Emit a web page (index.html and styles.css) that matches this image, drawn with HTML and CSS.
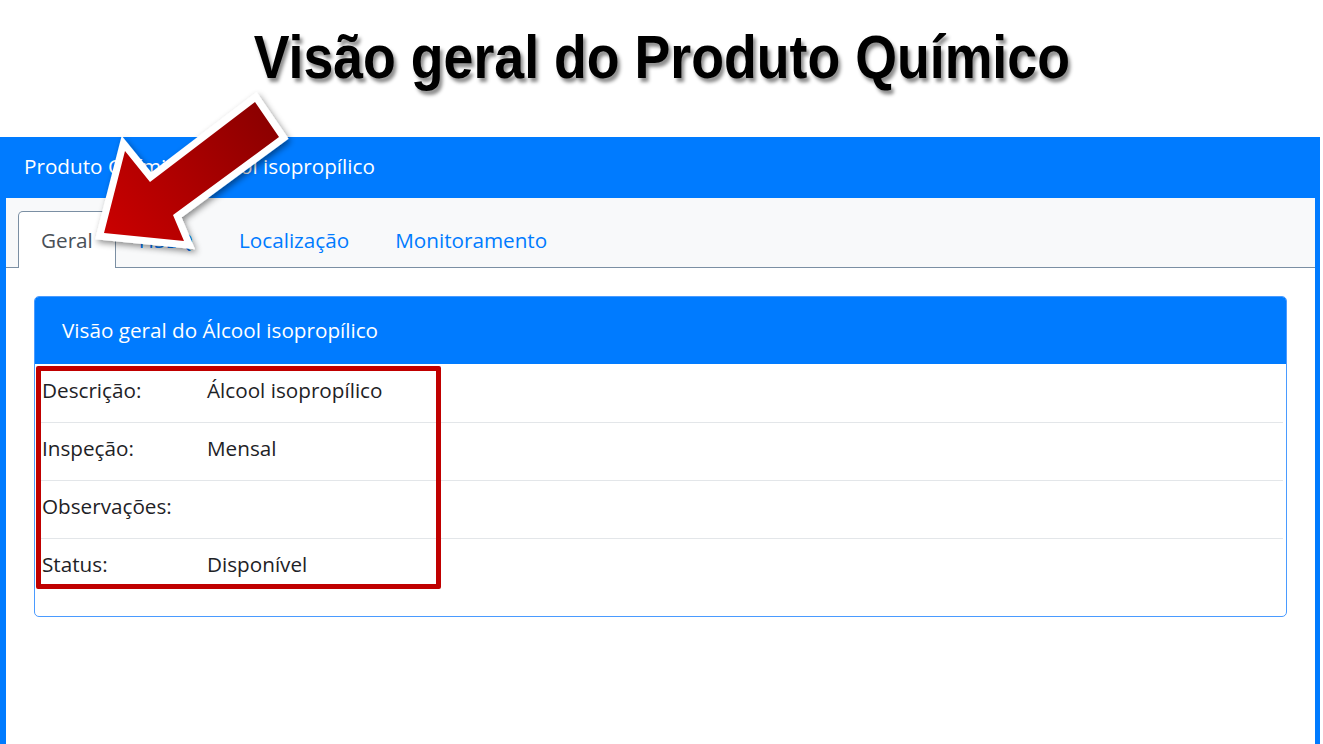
FILE: index.html
```html
<!DOCTYPE html>
<html lang="pt">
<head>
<meta charset="utf-8">
<title>Visão geral do Produto Químico</title>
<link rel="stylesheet" href="styles.css">
</head>
<body>
<div class="slide">
  <header class="slide-title"><h1><span>Visão geral do Produto Químico</span></h1></header>
  <section class="panel">
    <div class="panel-header">Produto Químico: Álcool isopropílico</div>
    <nav class="tabs">
      <a class="tab active">Geral</a>
      <a class="tab">HSEQ</a>
      <a class="tab">Localização</a>
      <a class="tab">Monitoramento</a>
    </nav>
    <div class="panel-body">
      <div class="card">
        <div class="card-header">Visão geral do Álcool isopropílico</div>
        <div class="card-body">
          <table class="info">
            <tr><th>Descrição:</th><td>Álcool isopropílico</td></tr>
            <tr><th>Inspeção:</th><td>Mensal</td></tr>
            <tr><th>Observações:</th><td></td></tr>
            <tr><th>Status:</th><td>Disponível</td></tr>
          </table>
          <div class="highlight"></div>
        </div>
      </div>
    </div>
  </section>
  <svg class="arrow" width="220" height="190" viewBox="80 85 220 190" xmlns="http://www.w3.org/2000/svg">
    <defs>
      <linearGradient id="rg" x1="270" y1="110" x2="110" y2="230" gradientUnits="userSpaceOnUse">
        <stop offset="0" stop-color="#8a0000"/>
        <stop offset="0.6" stop-color="#b00000"/>
        <stop offset="1" stop-color="#c80000"/>
      </linearGradient>
      <filter id="sh" x="-20%" y="-20%" width="140%" height="140%">
        <feDropShadow dx="2" dy="3" stdDeviation="3" flood-color="#000" flood-opacity="0.45"/>
      </filter>
    </defs>
    <polygon points="104,233 125,151 150,182 255,102 279,137 173,215 184,241" fill="#fff" stroke="#fff" stroke-width="14" stroke-linejoin="miter" stroke-miterlimit="3" filter="url(#sh)"/>
    <polygon points="104,233 125,151 150,182 255,102 279,137 173,215 184,241" fill="url(#rg)"/>
  </svg>
</div>
</body>
</html>
```

FILE: styles.css
```css
* { box-sizing: border-box; }
html, body { margin: 0; padding: 0; background: #fff; }
body { width: 1323px; height: 744px; overflow: hidden; font-family: "Open Sans", "Noto Sans", sans-serif; color: #212529; }
.slide { position: relative; width: 1323px; height: 744px; }

.slide-title { height: 137px; display: flex; justify-content: center; }
.slide-title h1 { margin: 0; padding-top: 22px; font-family: "Liberation Sans", Arial, sans-serif; font-weight: 700; font-size: 61px; line-height: 70px; color: #000; }
.slide-title h1 span { display: inline-block; transform: scaleX(0.88); transform-origin: center; text-shadow: 3px 4px 4px rgba(0,0,0,0.45); }

.panel { width: 1320px; height: 607px; border: 6px solid #007bff; border-top: 0; border-right-width: 5px; border-bottom: 0; }
.panel-header { background: #007bff; color: #fff; height: 61px; margin-left: -6px; margin-right: -5px; padding: 15px 0 0 24px; font-size: 20.7px; line-height: 28px; }

.tabs { display: flex; background: #f8f9fa; height: 70px; padding: 13px 0 0 12px; border-bottom: 1px solid #7b8fa3; }
.tab { display: block; padding: 14px 22px 0 22px; height: 57px; border: 1px solid transparent; border-bottom: 0; border-radius: 5px 5px 0 0; color: #007bff; font-size: 20.7px; line-height: 28px; }
.tab.active { background: #fff; color: #495057; border-color: #7b8fa3; height: 57px; margin-bottom: -1px; }

.panel-body { padding: 28px; }
.card { border: 1px solid #4a9bff; border-radius: 5px; overflow: hidden; height: 321px; }
.card-header { background: #007bff; color: #fff; height: 67px; padding: 19px 0 0 27px; font-size: 20.7px; line-height: 28px; }
.card-body { position: relative; padding: 0 3px 0 5px; }
.info { width: 100%; border-collapse: collapse; font-size: 20.7px; color: #1e2226; }
.info tr + tr th, .info tr + tr td { border-top: 1px solid #e3e6e9; }
.info th { width: 160px; text-align: left; font-weight: 400; padding: 0 0 6px 2px; height: 58px; vertical-align: middle; }
.info td { padding: 0 0 6px 7px; height: 58px; vertical-align: middle; }
.highlight { position: absolute; left: 1px; top: 2px; width: 405px; height: 223px; border: 5px solid #c00000; border-radius: 2px; }

.arrow { position: absolute; left: 80px; top: 85px; }
```
